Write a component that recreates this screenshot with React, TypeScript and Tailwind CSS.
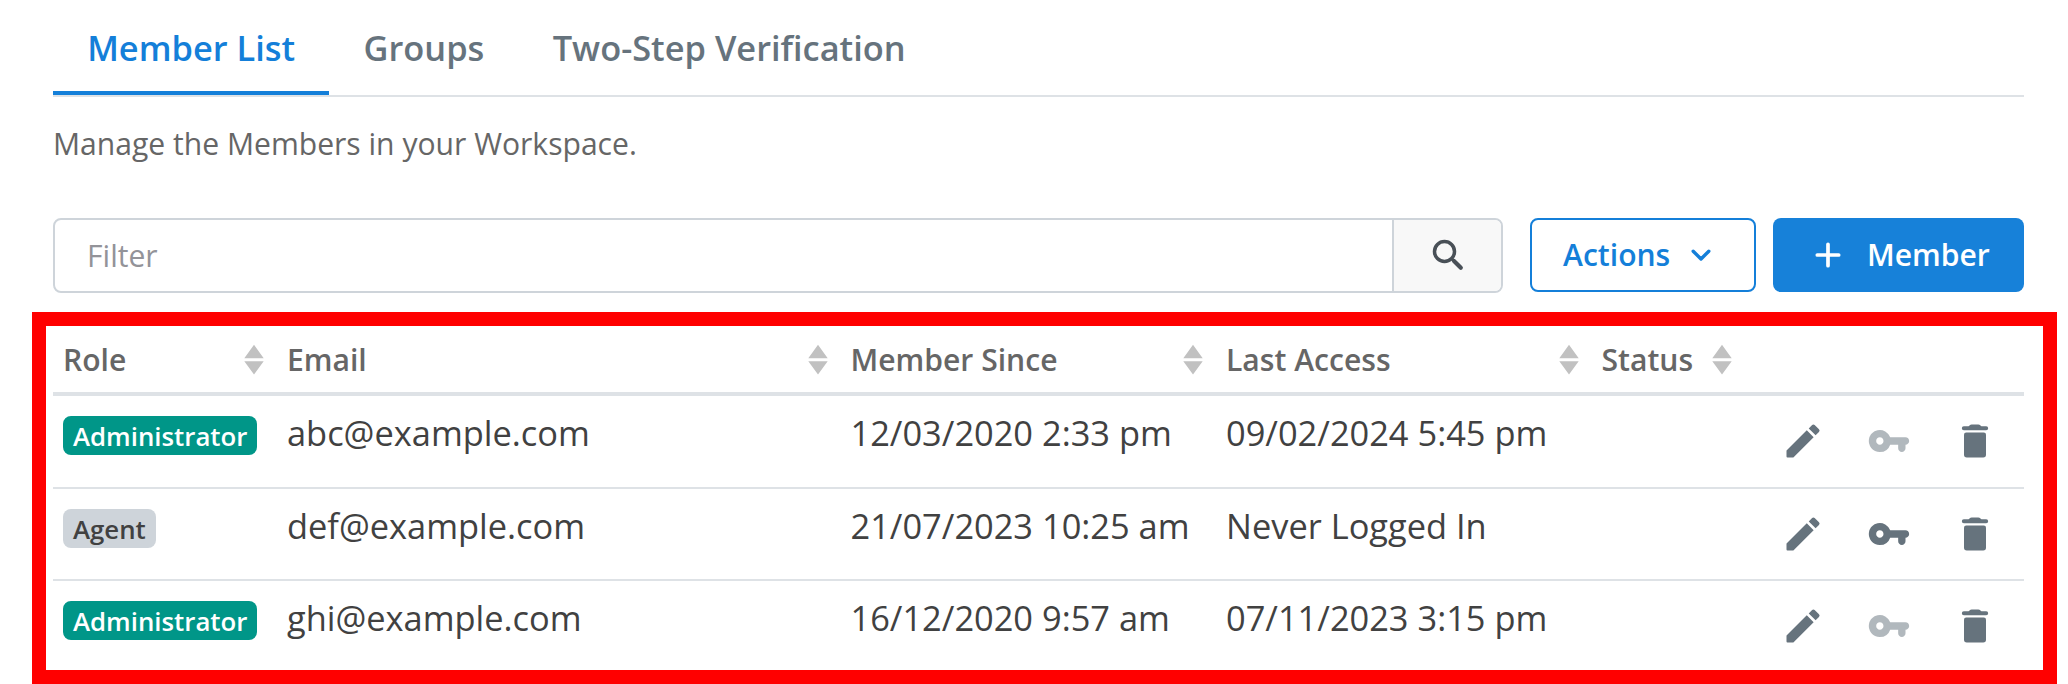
const tabs = ["Member List", "Groups", "Two-Step Verification"];

const columns = [
  { label: "Role", width: "w-[224px]" },
  { label: "Email", width: "w-[563.5px]" },
  { label: "Member Since", width: "w-[375.5px]" },
  { label: "Last Access", width: "w-[375.5px]" },
  { label: "Status", width: "w-[153px]" },
];

const members = [
  { role: "Administrator", email: "abc@example.com", since: "12/03/2020 2:33 pm", last: "09/02/2024 5:45 pm", key: false },
  { role: "Agent", email: "def@example.com", since: "21/07/2023 10:25 am", last: "Never Logged In", key: true },
  { role: "Administrator", email: "ghi@example.com", since: "16/12/2020 9:57 am", last: "07/11/2023 3:15 pm", key: false },
];

function SortArrows() {
  return (
    <svg width="20" height="31" viewBox="0 0 20 31" fill="#c1c1c1">
      <path d="M10 .8L19.700 14.200H.3zM.3 17.200h19.400L10 30.600z" />
    </svg>
  );
}

function SearchIcon() {
  return (
    <svg width="32" height="32" viewBox="0 0 32 32" fill="none" stroke="#495057">
      <circle cx="12.500" cy="12.500" r="10" strokeWidth="3.500" />
      <path d="M20.200 20.200L21.500 21.500" strokeWidth="3" />
      <path d="M22 22L28.800 28.800" strokeWidth="4.200" strokeLinecap="round" />
    </svg>
  );
}

function ChevronIcon() {
  return (
    <svg width="22" height="16" viewBox="0 0 22 16" fill="none" stroke="currentColor" strokeWidth="3.400" strokeLinecap="round" strokeLinejoin="round" className="ml-[20px]">
      <path d="M3.200 4.200L11 12L18.800 4.200" />
    </svg>
  );
}

function PlusIcon() {
  return (
    <svg width="26" height="26" viewBox="0 0 26 26" fill="none" stroke="currentColor" strokeWidth="3.700" strokeLinecap="round">
      <path d="M13 2.300V23.700M2.300 13H23.700" />
    </svg>
  );
}

function EditIcon() {
  return (
    <svg width="44" height="44" viewBox="0 0 24 24" fill="currentColor">
      <path d="M3 17.460v3.040c0 .28.22.5.5.5h3.040c.13 0 .26-.05.35-.15L17.810 9.940l-3.750-3.750L3.150 17.100c-.1.1-.15.22-.15.360zM20.710 7.040a.996.996 0 0 0 0-1.410l-2.340-2.340a.996.996 0 0 0-1.410 0l-1.830 1.830 3.750 3.750 1.830-1.830z" />
    </svg>
  );
}

function KeyIcon({ enabled }: { enabled: boolean }) {
  return (
    <svg width="44" height="44" viewBox="0 0 24 24" fill="currentColor" className={enabled ? "" : "opacity-50"}>
      <path d="M12.650 10a6 6 0 0 0-6.880-3.880c-2.290.46-4.150 2.290-4.630 4.580A6.006 6.006 0 0 0 7 18a5.990 5.990 0 0 0 5.650-4H17v2c0 1.100.9 2 2 2s2-.9 2-2v-2c1.100 0 2-.9 2-2s-.9-2-2-2h-8.350zM7 14c-1.100 0-2-.9-2-2s.9-2 2-2 2 .9 2 2-.9 2-2 2z" />
    </svg>
  );
}

function TrashIcon() {
  return (
    <svg width="44" height="44" viewBox="0 0 24 24" fill="currentColor">
      <path d="M6 8.500Q6 7.300 7.200 7.300H16.800Q18 7.300 18 8.500V19.500Q18 21 16.500 21H7.500Q6 21 6 19.500z" />
      <path d="M18.100 4h-2.600l-.5-.45Q14.500 3 13.800 3h-3.600Q9.500 3 9 3.550L8.500 4H5.900a1.080 1.080 0 0 0 0 2.160h12.200a1.080 1.080 0 0 0 0-2.160z" />
    </svg>
  );
}

export default function App() {
  return (
    <div className="h-[684px] w-[2068px] overflow-hidden bg-white font-['Open_Sans',sans-serif] text-[#414141]">
      <div className="ml-[53px] w-[1971px]">
        <nav className="flex h-[97px] items-stretch border-b-2 border-[#dee2e6] text-[34.4px] font-semibold text-[#66737d]">
          {tabs.map((tab, i) => (
            <button
              key={tab}
              className={
                i === 0
                  ? "border-b-4 border-[#147fd9] px-[34.2px] pt-[4px] text-[#147fd9]"
                  : "border-b-4 border-transparent px-[34.2px] pt-[4px]"
              }
            >
              {tab}
            </button>
          ))}
        </nav>
        <p className="mt-[23px] h-[48px] text-[30.1px] leading-[48px] text-[#666666]">Manage the Members in your Workspace.</p>
        <div className="mt-[49.500px] flex h-[74px] items-start">
          <div className="flex h-[75px] w-[1450px] overflow-hidden rounded-lg border-2 border-[#ced4da]">
            <div className="flex flex-1 items-center pt-px pl-[32px] text-[30.1px] text-[#939399]">Filter</div>
            <button className="flex w-[109px] items-center justify-center border-l-2 border-[#ced4da] bg-[#f8f8f8]">
              <SearchIcon />
            </button>
          </div>
          <button className="ml-[27px] flex h-[74px] w-[226px] items-center rounded-lg border-2 border-[#147fd9] pt-px pl-[31px] text-[30.1px] font-semibold text-[#147fd9]">
            Actions
            <ChevronIcon />
          </button>
          <button className="ml-[17px] flex h-[74px] flex-1 items-center rounded-lg bg-[#1781d9] pt-px pl-[42px] text-[30.1px] font-semibold text-white">
            <PlusIcon />
            <span className="ml-[26px]">Member</span>
          </button>
        </div>
      </div>
      <section className="mt-[20.500px] ml-8 h-[372px] w-[2025px] border-14 border-[#ff0000] pl-[7px]">
        <div className="w-[1971px]">
          <div className="flex h-[70px] border-b-4 border-[#dee2e6] pl-[10px] text-[30.1px] font-semibold text-[#666666]">
            {columns.map((c) => (
              <div key={c.label} className={`flex items-center ${c.width}`}>
                <span className="flex-1 pt-[2px]">{c.label}</span>
                <span className="mr-[23px]">
                  <SortArrows />
                </span>
              </div>
            ))}
          </div>
          {members.map((m) => (
            <div
              key={m.email}
              className="flex h-[92px] border-b-2 border-[#dee2e6] pl-[10px] text-[34.4px] leading-[52px] last:border-0 nth-2:h-[93px]"
            >
              <div className="flex w-[224px] items-start pt-[20px]">
                <span
                  className={
                    m.role === "Agent"
                      ? "flex h-[39px] items-center rounded-lg bg-[#ced4da] px-[10px] text-[25.8px] font-semibold text-[#414141]"
                      : "flex h-[39px] items-center rounded-lg bg-[#009688] px-[10px] text-[25.8px] font-semibold text-white"
                  }
                >
                  {m.role}
                </span>
              </div>
              <div className="w-[563.5px] pt-[11px]">{m.email}</div>
              <div className="w-[375.5px] pt-[11px]">{m.since}</div>
              <div className="w-[375.5px] pt-[11px]">{m.last}</div>
              <div className="flex flex-1 justify-end gap-[42px] pt-[22.5px] pr-[27px] text-[#66737d]">
                <EditIcon />
                <KeyIcon enabled={m.key} />
                <TrashIcon />
              </div>
            </div>
          ))}
        </div>
      </section>
    </div>
  );
}
